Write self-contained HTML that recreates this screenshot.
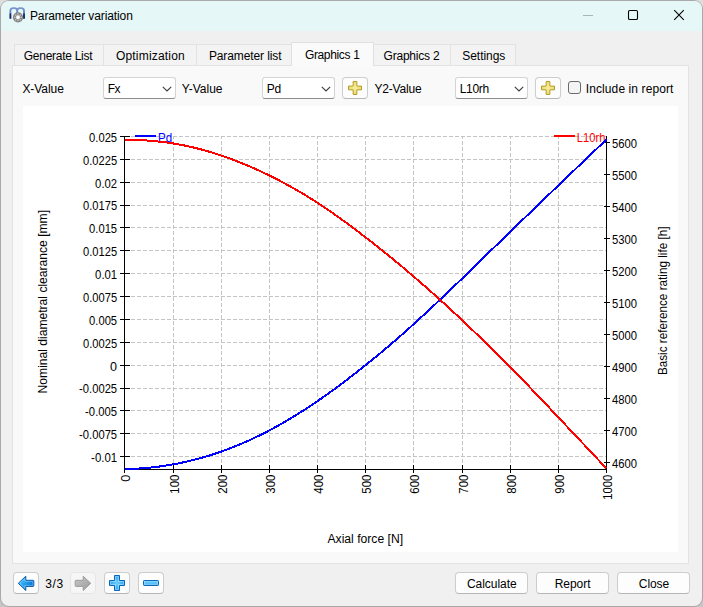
<!DOCTYPE html>
<html lang="en"><head><meta charset="utf-8"><title>Parameter variation</title>
<style>
html,body{margin:0;padding:0;}
body{width:703px;height:607px;overflow:hidden;background:linear-gradient(#dedede,#dedede 20px,#c6c6c6 590px,#c6c6c6);font-family:"Liberation Sans",sans-serif;font-size:12px;color:#000;position:relative;}
.abs,.t,.chart,.btn,.combo,.tab{position:absolute;box-sizing:border-box;}
.win{position:absolute;left:1px;top:1px;width:701px;height:605px;background:#f0f0f0;border-radius:8px;box-shadow:0 0 0 1px #a9a9a9;overflow:hidden;}
.inner{position:absolute;left:-1px;top:-1px;width:703px;height:607px;}
.titlebar{left:1px;top:1px;width:701px;height:30px;background:#e5f7f7;}
.t{white-space:pre;line-height:14px;font-size:12px;z-index:5;}
.tab{top:44px;height:21px;background:#f3f3f3;border:1px solid #e2e2e2;border-bottom:none;}
.tab.sel{top:42px;height:24px;background:#fafafa;border-color:#e0e0e0;z-index:2;}
.pane{left:12px;top:65px;width:677px;height:499px;background:#f9f9f9;border:1px solid #e3e3e3;}
.combo{top:77px;width:73px;height:22px;background:#fff;border:1px solid #d4d4d4;border-bottom-color:#8c8c8c;border-radius:3px;}
.btn{height:22px;background:#fdfdfd;border:1px solid #cdcdcd;border-bottom-color:#b6b6b6;border-radius:4px;}
.btn.dis{background:#f6f6f6;border-color:#e6e6e6;}
.chk{left:568px;top:81px;width:13px;height:13px;border:1px solid #6a6a6a;border-radius:3px;background:#f4f4f4;}
svg{display:block;overflow:visible;}
</style></head><body>
<div class="abs" style="left:702px;top:8px;width:1px;height:590px;background:#8e8e8e"></div>
<div class="win"><div class="inner">
<div class="abs titlebar"></div>
<svg class="abs" style="left:8px;top:6px" width="19" height="19" viewBox="8 6 19 19">
<defs><linearGradient id="mg" x1="0" y1="7" x2="0" y2="19" gradientUnits="userSpaceOnUse"><stop offset="0" stop-color="#7d99d0"/><stop offset="0.5" stop-color="#6985c4"/><stop offset="0.57" stop-color="#1b2b72"/><stop offset="1" stop-color="#141f60"/></linearGradient></defs>
<path d="M10.4 18.7 V10.8 Q10.4 8.1 13.1 8.1 H14.5 Q17.2 8.1 17.2 10.8 V18 M17.2 10.8 Q17.2 8.1 19.9 8.1 H21.3 Q24 8.1 24 10.8 V18.7" fill="none" stroke="url(#mg)" stroke-width="1.9"/>
<circle cx="18" cy="17.3" r="5.1" fill="#858585"/><circle cx="21.30" cy="17.30" r="0.75" fill="#c9c9c9"/><circle cx="20.33" cy="19.63" r="0.75" fill="#c9c9c9"/><circle cx="18.00" cy="20.60" r="0.75" fill="#c9c9c9"/><circle cx="15.67" cy="19.63" r="0.75" fill="#c9c9c9"/><circle cx="14.70" cy="17.30" r="0.75" fill="#c9c9c9"/><circle cx="15.67" cy="14.97" r="0.75" fill="#c9c9c9"/><circle cx="18.00" cy="14.00" r="0.75" fill="#c9c9c9"/><circle cx="20.33" cy="14.97" r="0.75" fill="#c9c9c9"/><circle cx="18" cy="17.3" r="2.2" fill="#d4d4d4"/><circle cx="18" cy="17.3" r="1.5" fill="#ffffff"/>
</svg>
<svg class="abs" style="left:570px;top:0px" width="133" height="32" viewBox="570 0 133 32">
<line x1="583" y1="15.5" x2="593" y2="15.5" stroke="#a9b6b6" stroke-width="1"/>
<rect x="628.5" y="10.5" width="9" height="9" rx="1.3" fill="none" stroke="#000" stroke-width="1.1"/>
<path d="M674.2 10.2 L683.8 19.8 M683.8 10.2 L674.2 19.8" stroke="#000" stroke-width="1.1" fill="none"/>
</svg>
<div class="abs pane"></div>
<div class="tab " style="left:14px;width:91px"></div>
<div class="tab " style="left:103px;width:95px"></div>
<div class="tab " style="left:196px;width:97px"></div>
<div class="tab sel" style="left:291px;width:83px"></div>
<div class="tab " style="left:373px;width:79px"></div>
<div class="tab " style="left:450px;width:66px"></div>
<div class="combo" style="left:103px"></div>
<svg class="abs" style="left:162px;top:86px" width="10" height="6" viewBox="0 0 10 6"><path d="M0.8 0.8 L5 5 L9.2 0.8" fill="none" stroke="#3c3c3c" stroke-width="1.1"/></svg>
<div class="combo" style="left:262px"></div>
<svg class="abs" style="left:321px;top:86px" width="10" height="6" viewBox="0 0 10 6"><path d="M0.8 0.8 L5 5 L9.2 0.8" fill="none" stroke="#3c3c3c" stroke-width="1.1"/></svg>
<div class="combo" style="left:455px"></div>
<svg class="abs" style="left:514px;top:86px" width="10" height="6" viewBox="0 0 10 6"><path d="M0.8 0.8 L5 5 L9.2 0.8" fill="none" stroke="#3c3c3c" stroke-width="1.1"/></svg>
<div class="btn" style="left:342px;top:77px;width:26px"></div>
<svg class="abs" style="left:0;top:0" width="703" height="607" viewBox="0 0 703 607"><defs><radialGradient id="gp0" cx="355" cy="87.95" r="7.8" gradientUnits="userSpaceOnUse"><stop offset="0" stop-color="#f8ee98"/><stop offset="1" stop-color="#e4ca42"/></radialGradient></defs><path d="M353.15 81.45 H356.85 V86.10000000000001 H361.5 V89.8 H356.85 V94.45 H353.15 V89.8 H348.5 V86.10000000000001 H353.15 Z" fill="url(#gp0)" stroke="#b29c24" stroke-width="1" stroke-linejoin="round"/><path d="M354.15 82.45 H355.85 V87.10000000000001 H360.5 V88.8 H355.85 V93.45 H354.15 V88.8 H349.5 V87.10000000000001 H354.15 Z" fill="none" stroke="rgba(255,255,255,0.25)" stroke-width="0.8" stroke-linejoin="round"/></svg>
<div class="btn" style="left:535px;top:77px;width:26px"></div>
<svg class="abs" style="left:0;top:0" width="703" height="607" viewBox="0 0 703 607"><defs><radialGradient id="gp1" cx="548" cy="87.95" r="7.8" gradientUnits="userSpaceOnUse"><stop offset="0" stop-color="#f8ee98"/><stop offset="1" stop-color="#e4ca42"/></radialGradient></defs><path d="M546.15 81.45 H549.85 V86.10000000000001 H554.5 V89.8 H549.85 V94.45 H546.15 V89.8 H541.5 V86.10000000000001 H546.15 Z" fill="url(#gp1)" stroke="#b29c24" stroke-width="1" stroke-linejoin="round"/><path d="M547.15 82.45 H548.85 V87.10000000000001 H553.5 V88.8 H548.85 V93.45 H547.15 V88.8 H542.5 V87.10000000000001 H547.15 Z" fill="none" stroke="rgba(255,255,255,0.25)" stroke-width="0.8" stroke-linejoin="round"/></svg>
<div class="abs chk"></div>
<svg class="chart" width="655" height="446" viewBox="23 106 655 446" style="left:23px;top:106px">
<rect x="23" y="106" width="655" height="446" fill="#ffffff"/>
<g stroke="#c4c4c4" stroke-width="1" stroke-dasharray="4 2" shape-rendering="crispEdges" fill="none">
<line x1="131" y1="136.5" x2="606" y2="136.5"/>
<line x1="131" y1="159.5" x2="606" y2="159.5"/>
<line x1="131" y1="182.5" x2="606" y2="182.5"/>
<line x1="131" y1="205.5" x2="606" y2="205.5"/>
<line x1="131" y1="227.5" x2="606" y2="227.5"/>
<line x1="131" y1="250.5" x2="606" y2="250.5"/>
<line x1="131" y1="273.5" x2="606" y2="273.5"/>
<line x1="131" y1="296.5" x2="606" y2="296.5"/>
<line x1="131" y1="319.5" x2="606" y2="319.5"/>
<line x1="131" y1="342.5" x2="606" y2="342.5"/>
<line x1="131" y1="365.5" x2="606" y2="365.5"/>
<line x1="131" y1="388.5" x2="606" y2="388.5"/>
<line x1="131" y1="410.5" x2="606" y2="410.5"/>
<line x1="131" y1="433.5" x2="606" y2="433.5"/>
<line x1="131" y1="456.5" x2="606" y2="456.5"/>
<line x1="173.5" y1="136" x2="173.5" y2="465" stroke-dashoffset="1"/>
<line x1="221.5" y1="136" x2="221.5" y2="465" stroke-dashoffset="1"/>
<line x1="269.5" y1="136" x2="269.5" y2="465" stroke-dashoffset="1"/>
<line x1="317.5" y1="136" x2="317.5" y2="465" stroke-dashoffset="1"/>
<line x1="365.5" y1="136" x2="365.5" y2="465" stroke-dashoffset="1"/>
<line x1="413.5" y1="136" x2="413.5" y2="465" stroke-dashoffset="1"/>
<line x1="462.5" y1="136" x2="462.5" y2="465" stroke-dashoffset="1"/>
<line x1="510.5" y1="136" x2="510.5" y2="465" stroke-dashoffset="1"/>
<line x1="558.5" y1="136" x2="558.5" y2="465" stroke-dashoffset="1"/>
</g>
<g stroke="#000" stroke-width="1" shape-rendering="crispEdges" fill="none">
<line x1="124.5" y1="136" x2="124.5" y2="473"/>
<line x1="606.5" y1="136" x2="606.5" y2="473"/>
<line x1="124" y1="469.5" x2="607" y2="469.5"/>
<line x1="120" y1="136.5" x2="130" y2="136.5"/>
<line x1="120" y1="159.5" x2="130" y2="159.5"/>
<line x1="120" y1="182.5" x2="130" y2="182.5"/>
<line x1="120" y1="205.5" x2="130" y2="205.5"/>
<line x1="120" y1="227.5" x2="130" y2="227.5"/>
<line x1="120" y1="250.5" x2="130" y2="250.5"/>
<line x1="120" y1="273.5" x2="130" y2="273.5"/>
<line x1="120" y1="296.5" x2="130" y2="296.5"/>
<line x1="120" y1="319.5" x2="130" y2="319.5"/>
<line x1="120" y1="342.5" x2="130" y2="342.5"/>
<line x1="120" y1="365.5" x2="130" y2="365.5"/>
<line x1="120" y1="388.5" x2="130" y2="388.5"/>
<line x1="120" y1="410.5" x2="130" y2="410.5"/>
<line x1="120" y1="433.5" x2="130" y2="433.5"/>
<line x1="120" y1="456.5" x2="130" y2="456.5"/>
<line x1="604" y1="142.5" x2="610" y2="142.5"/>
<line x1="604" y1="174.5" x2="610" y2="174.5"/>
<line x1="604" y1="206.5" x2="610" y2="206.5"/>
<line x1="604" y1="238.5" x2="610" y2="238.5"/>
<line x1="604" y1="270.5" x2="610" y2="270.5"/>
<line x1="604" y1="302.5" x2="610" y2="302.5"/>
<line x1="604" y1="334.5" x2="610" y2="334.5"/>
<line x1="604" y1="366.5" x2="610" y2="366.5"/>
<line x1="604" y1="398.5" x2="610" y2="398.5"/>
<line x1="604" y1="430.5" x2="610" y2="430.5"/>
<line x1="604" y1="462.5" x2="610" y2="462.5"/>
<line x1="124.5" y1="465" x2="124.5" y2="473"/>
<line x1="173.5" y1="465" x2="173.5" y2="473"/>
<line x1="221.5" y1="465" x2="221.5" y2="473"/>
<line x1="269.5" y1="465" x2="269.5" y2="473"/>
<line x1="317.5" y1="465" x2="317.5" y2="473"/>
<line x1="365.5" y1="465" x2="365.5" y2="473"/>
<line x1="413.5" y1="465" x2="413.5" y2="473"/>
<line x1="462.5" y1="465" x2="462.5" y2="473"/>
<line x1="510.5" y1="465" x2="510.5" y2="473"/>
<line x1="558.5" y1="465" x2="558.5" y2="473"/>
<line x1="606.5" y1="465" x2="606.5" y2="473"/>
</g>
<line x1="135" y1="136" x2="156" y2="136" stroke="#0000ff" stroke-width="2" shape-rendering="crispEdges"/>
<line x1="554" y1="136" x2="575" y2="136" stroke="#ff0000" stroke-width="2" shape-rendering="crispEdges"/>
<g font-family='"Liberation Sans", sans-serif' font-size="12" fill="#000">
<text x="158" y="141.5" fill="#0000ff" textLength="14.2" lengthAdjust="spacingAndGlyphs">Pd</text>
<text x="576.8" y="141.5" fill="#ff0000" textLength="28.6" lengthAdjust="spacingAndGlyphs">L10rh</text>
<text x="117.1" y="141.8" text-anchor="end" font-size="12.6" textLength="28" lengthAdjust="spacingAndGlyphs">0.025</text>
<text x="117.1" y="164.7" text-anchor="end" font-size="12.6" textLength="34" lengthAdjust="spacingAndGlyphs">0.0225</text>
<text x="117.1" y="187.5" text-anchor="end" font-size="12.6" textLength="22" lengthAdjust="spacingAndGlyphs">0.02</text>
<text x="117.1" y="210.4" text-anchor="end" font-size="12.6" textLength="34" lengthAdjust="spacingAndGlyphs">0.0175</text>
<text x="117.1" y="233.3" text-anchor="end" font-size="12.6" textLength="28" lengthAdjust="spacingAndGlyphs">0.015</text>
<text x="117.1" y="256.2" text-anchor="end" font-size="12.6" textLength="34" lengthAdjust="spacingAndGlyphs">0.0125</text>
<text x="117.1" y="279.0" text-anchor="end" font-size="12.6" textLength="22" lengthAdjust="spacingAndGlyphs">0.01</text>
<text x="117.1" y="301.9" text-anchor="end" font-size="12.6" textLength="34" lengthAdjust="spacingAndGlyphs">0.0075</text>
<text x="117.1" y="324.8" text-anchor="end" font-size="12.6" textLength="28" lengthAdjust="spacingAndGlyphs">0.005</text>
<text x="117.1" y="347.6" text-anchor="end" font-size="12.6" textLength="34" lengthAdjust="spacingAndGlyphs">0.0025</text>
<text x="117.1" y="370.5" text-anchor="end" font-size="12.6" textLength="7" lengthAdjust="spacingAndGlyphs">0</text>
<text x="117.1" y="393.4" text-anchor="end" font-size="12.6" textLength="38" lengthAdjust="spacingAndGlyphs">-0.0025</text>
<text x="117.1" y="416.2" text-anchor="end" font-size="12.6" textLength="32" lengthAdjust="spacingAndGlyphs">-0.005</text>
<text x="117.1" y="439.1" text-anchor="end" font-size="12.6" textLength="38" lengthAdjust="spacingAndGlyphs">-0.0075</text>
<text x="117.1" y="462.0" text-anchor="end" font-size="12.6" textLength="26" lengthAdjust="spacingAndGlyphs">-0.01</text>
<text x="611.9" y="147.8" font-size="12.6" textLength="25" lengthAdjust="spacingAndGlyphs">5600</text>
<text x="611.9" y="179.8" font-size="12.6" textLength="25" lengthAdjust="spacingAndGlyphs">5500</text>
<text x="611.9" y="211.8" font-size="12.6" textLength="25" lengthAdjust="spacingAndGlyphs">5400</text>
<text x="611.9" y="243.8" font-size="12.6" textLength="25" lengthAdjust="spacingAndGlyphs">5300</text>
<text x="611.9" y="275.8" font-size="12.6" textLength="25" lengthAdjust="spacingAndGlyphs">5200</text>
<text x="611.9" y="307.8" font-size="12.6" textLength="25" lengthAdjust="spacingAndGlyphs">5100</text>
<text x="611.9" y="339.8" font-size="12.6" textLength="25" lengthAdjust="spacingAndGlyphs">5000</text>
<text x="611.9" y="371.8" font-size="12.6" textLength="25" lengthAdjust="spacingAndGlyphs">4900</text>
<text x="611.9" y="403.8" font-size="12.6" textLength="25" lengthAdjust="spacingAndGlyphs">4800</text>
<text x="611.9" y="435.8" font-size="12.6" textLength="25" lengthAdjust="spacingAndGlyphs">4700</text>
<text x="611.9" y="467.8" font-size="12.6" textLength="25" lengthAdjust="spacingAndGlyphs">4600</text>
<text transform="translate(130.1,474.7) rotate(-90)" text-anchor="end" font-size="12.6" textLength="7" lengthAdjust="spacingAndGlyphs">0</text>
<text transform="translate(179.1,474.7) rotate(-90)" text-anchor="end" font-size="12.6" textLength="19" lengthAdjust="spacingAndGlyphs">100</text>
<text transform="translate(227.1,474.7) rotate(-90)" text-anchor="end" font-size="12.6" textLength="19" lengthAdjust="spacingAndGlyphs">200</text>
<text transform="translate(275.1,474.7) rotate(-90)" text-anchor="end" font-size="12.6" textLength="19" lengthAdjust="spacingAndGlyphs">300</text>
<text transform="translate(323.1,474.7) rotate(-90)" text-anchor="end" font-size="12.6" textLength="19" lengthAdjust="spacingAndGlyphs">400</text>
<text transform="translate(371.1,474.7) rotate(-90)" text-anchor="end" font-size="12.6" textLength="19" lengthAdjust="spacingAndGlyphs">500</text>
<text transform="translate(419.1,474.7) rotate(-90)" text-anchor="end" font-size="12.6" textLength="19" lengthAdjust="spacingAndGlyphs">600</text>
<text transform="translate(468.1,474.7) rotate(-90)" text-anchor="end" font-size="12.6" textLength="19" lengthAdjust="spacingAndGlyphs">700</text>
<text transform="translate(516.1,474.7) rotate(-90)" text-anchor="end" font-size="12.6" textLength="19" lengthAdjust="spacingAndGlyphs">800</text>
<text transform="translate(564.1,474.7) rotate(-90)" text-anchor="end" font-size="12.6" textLength="19" lengthAdjust="spacingAndGlyphs">900</text>
<text transform="translate(612.1,474.7) rotate(-90)" text-anchor="end" font-size="12.6" textLength="25" lengthAdjust="spacingAndGlyphs">1000</text>
<text x="365.3" y="542.7" text-anchor="middle" textLength="75.6" lengthAdjust="spacingAndGlyphs">Axial force [N]</text>
<text transform="translate(46.6,301.7) rotate(-90)" text-anchor="middle" textLength="183.4" lengthAdjust="spacingAndGlyphs">Nominal diametral clearance [mm]</text>
<text transform="translate(666.8,300.8) rotate(-90)" text-anchor="middle" textLength="148.6" lengthAdjust="spacingAndGlyphs">Basic reference rating life [h]</text>
</g>
<polyline points="124.5,469.0 127.0,469.0 129.4,468.9 131.8,468.9 134.3,468.8 136.8,468.7 139.2,468.5 141.7,468.4 144.1,468.2 146.6,468.0 149.0,467.7 151.4,467.5 153.9,467.2 156.3,466.9 158.8,466.6 161.2,466.3 163.7,465.9 166.2,465.5 168.6,465.1 171.1,464.7 173.5,464.3 175.9,463.8 178.3,463.4 180.7,462.9 183.1,462.4 185.5,461.9 187.9,461.3 190.3,460.7 192.7,460.1 195.1,459.5 197.5,458.9 199.9,458.3 202.3,457.6 204.7,456.9 207.1,456.2 209.5,455.5 211.9,454.7 214.3,453.9 216.7,453.2 219.1,452.3 221.5,451.5 223.9,450.6 226.3,449.8 228.7,448.9 231.1,447.9 233.5,447.0 235.9,446.0 238.3,445.0 240.7,444.0 243.1,443.0 245.5,441.9 247.9,440.9 250.3,439.8 252.7,438.7 255.1,437.5 257.5,436.4 259.9,435.2 262.3,434.0 264.7,432.8 267.1,431.6 269.5,430.3 271.9,429.0 274.3,427.7 276.7,426.4 279.1,425.1 281.5,423.7 283.9,422.3 286.3,420.9 288.7,419.5 291.1,418.1 293.5,416.6 295.9,415.2 298.3,413.7 300.7,412.2 303.1,410.6 305.5,409.1 307.9,407.5 310.3,406.0 312.7,404.4 315.1,402.7 317.5,401.1 319.9,399.4 322.3,397.8 324.7,396.1 327.1,394.4 329.5,392.7 331.9,390.9 334.3,389.2 336.7,387.4 339.1,385.6 341.5,383.9 343.9,382.0 346.3,380.2 348.7,378.4 351.1,376.5 353.5,374.7 355.9,372.8 358.3,370.9 360.7,369.0 363.1,367.1 365.5,365.2 367.9,363.3 370.3,361.3 372.7,359.4 375.1,357.4 377.5,355.4 379.9,353.5 382.3,351.5 384.7,349.4 387.1,347.4 389.5,345.4 391.9,343.3 394.3,341.3 396.7,339.2 399.1,337.1 401.5,335.0 403.9,332.9 406.3,330.7 408.7,328.6 411.1,326.4 413.5,324.2 415.9,322.0 418.4,319.8 420.9,317.5 423.3,315.3 425.8,313.0 428.2,310.8 430.6,308.5 433.1,306.2 435.6,303.9 438.0,301.6 440.4,299.3 442.9,296.9 445.4,294.6 447.8,292.3 450.2,289.9 452.7,287.6 455.1,285.2 457.6,282.9 460.1,280.5 462.5,278.2 464.9,275.9 467.3,273.5 469.7,271.2 472.1,268.8 474.5,266.5 476.9,264.1 479.3,261.8 481.7,259.5 484.1,257.1 486.5,254.8 488.9,252.5 491.3,250.1 493.7,247.8 496.1,245.5 498.5,243.1 500.9,240.8 503.3,238.5 505.7,236.1 508.1,233.8 510.5,231.5 512.9,229.2 515.3,226.9 517.7,224.5 520.1,222.2 522.5,219.9 524.9,217.6 527.3,215.3 529.7,213.0 532.1,210.7 534.5,208.3 536.9,206.0 539.3,203.7 541.7,201.4 544.1,199.1 546.5,196.8 548.9,194.5 551.3,192.2 553.7,189.9 556.1,187.6 558.5,185.3 560.9,183.0 563.3,180.7 565.7,178.4 568.1,176.1 570.5,173.8 572.9,171.5 575.3,169.2 577.7,166.9 580.1,164.6 582.5,162.3 584.9,160.0 587.3,157.7 589.7,155.4 592.1,153.2 594.5,150.9 596.9,148.6 599.3,146.3 601.7,144.0 604.1,141.7 606.5,139.4" fill="none" stroke="#0000ff" stroke-width="2" shape-rendering="crispEdges"/>
<polyline points="124.5,139.8 127.0,139.8 129.4,139.8 131.8,139.9 134.3,140.0 136.8,140.0 139.2,140.1 141.7,140.2 144.1,140.4 146.6,140.5 149.0,140.7 151.4,140.9 153.9,141.1 156.3,141.3 158.8,141.6 161.2,141.8 163.7,142.1 166.2,142.4 168.6,142.8 171.1,143.1 173.5,143.5 175.9,143.9 178.3,144.3 180.7,144.8 183.1,145.2 185.5,145.7 187.9,146.2 190.3,146.8 192.7,147.3 195.1,147.9 197.5,148.5 199.9,149.1 202.3,149.7 204.7,150.4 207.1,151.1 209.5,151.8 211.9,152.5 214.3,153.3 216.7,154.0 219.1,154.8 221.5,155.6 223.9,156.4 226.3,157.3 228.7,158.1 231.1,159.0 233.5,159.9 235.9,160.8 238.3,161.8 240.7,162.7 243.1,163.7 245.5,164.7 247.9,165.7 250.3,166.7 252.7,167.8 255.1,168.8 257.5,169.9 259.9,171.0 262.3,172.1 264.7,173.3 267.1,174.4 269.5,175.6 271.9,176.8 274.3,178.0 276.7,179.2 279.1,180.4 281.5,181.7 283.9,183.0 286.3,184.3 288.7,185.6 291.1,186.9 293.5,188.3 295.9,189.6 298.3,191.0 300.7,192.4 303.1,193.8 305.5,195.3 307.9,196.7 310.3,198.2 312.7,199.7 315.1,201.3 317.5,202.8 319.9,204.4 322.3,206.0 324.7,207.6 327.1,209.2 329.5,210.8 331.9,212.5 334.3,214.2 336.7,215.9 339.1,217.6 341.5,219.3 343.9,221.1 346.3,222.8 348.7,224.6 351.1,226.4 353.5,228.2 355.9,230.0 358.3,231.8 360.7,233.6 363.1,235.5 365.5,237.3 367.9,239.2 370.3,241.0 372.7,242.9 375.1,244.8 377.5,246.7 379.9,248.6 382.3,250.5 384.7,252.4 387.1,254.3 389.5,256.3 391.9,258.2 394.3,260.2 396.7,262.2 399.1,264.1 401.5,266.2 403.9,268.2 406.3,270.2 408.7,272.3 411.1,274.3 413.5,276.4 415.9,278.5 418.4,280.6 420.9,282.7 423.3,284.9 425.8,287.0 428.2,289.2 430.6,291.4 433.1,293.5 435.6,295.7 438.0,298.0 440.4,300.2 442.9,302.4 445.4,304.6 447.8,306.9 450.2,309.1 452.7,311.4 455.1,313.7 457.6,315.9 460.1,318.2 462.5,320.5 464.9,322.8 467.3,325.1 469.7,327.4 472.1,329.7 474.5,332.0 476.9,334.3 479.3,336.6 481.7,338.9 484.1,341.2 486.5,343.6 488.9,345.9 491.3,348.3 493.7,350.6 496.1,353.0 498.5,355.4 500.9,357.8 503.3,360.2 505.7,362.6 508.1,365.0 510.5,367.4 512.9,369.8 515.3,372.3 517.7,374.7 520.1,377.2 522.5,379.7 524.9,382.2 527.3,384.6 529.7,387.1 532.1,389.7 534.5,392.2 536.9,394.7 539.3,397.2 541.7,399.7 544.1,402.3 546.5,404.8 548.9,407.3 551.3,409.9 553.7,412.4 556.1,415.0 558.5,417.5 560.9,420.0 563.3,422.6 565.7,425.1 568.1,427.7 570.5,430.2 572.9,432.8 575.3,435.3 577.7,437.9 580.1,440.4 582.5,443.0 584.9,445.5 587.3,448.1 589.7,450.6 592.1,453.2 594.5,455.7 596.9,458.3 599.3,460.8 601.7,463.4 604.1,465.9 606.5,468.5" fill="none" stroke="#ff0000" stroke-width="2" shape-rendering="crispEdges"/>
</svg>
<div class="btn" style="left:13px;top:572px;width:26px"></div>
<div class="btn dis" style="left:70px;top:572px;width:26px"></div>
<div class="btn" style="left:104px;top:572px;width:26px"></div>
<div class="btn" style="left:138px;top:572px;width:26px"></div>
<div class="btn" style="left:455px;top:572px;width:73px"></div>
<div class="btn" style="left:536px;top:572px;width:73px"></div>
<div class="btn" style="left:617px;top:572px;width:73px"></div>
<svg class="abs" style="left:0;top:0" width="703" height="607" viewBox="0 0 703 607">
<defs><linearGradient id="ab" x1="0" y1="0" x2="1" y2="0.6"><stop offset="0" stop-color="#66ccff"/><stop offset="0.45" stop-color="#2aa8f4"/><stop offset="1" stop-color="#0670d0"/></linearGradient>
<linearGradient id="ag" x1="0" y1="0" x2="1" y2="1"><stop offset="0" stop-color="#c8c8c8"/><stop offset="1" stop-color="#9a9a9a"/></linearGradient></defs>
<path d="M18.3 583.3 L25.8 576.2 V580.3 H33 Q33.8 580.3 33.8 581.1 V585.6 Q33.8 586.4 33 586.4 H25.8 V590.5 Z" fill="url(#ab)" stroke="#0b5cab" stroke-width="1" stroke-linejoin="round"/>
<path d="M19.8 583.3 L24.8 578.6 V581.3 H32.8 V585.4 H24.8 V588.1 Z" fill="none" stroke="rgba(255,255,255,0.4)" stroke-width="0.8" stroke-linejoin="round"/>
<path d="M90.7 583.3 L83.2 576.2 V580.3 H76 Q75.2 580.3 75.2 581.1 V585.6 Q75.2 586.4 76 586.4 H83.2 V590.5 Z" fill="url(#ag)" stroke="#9c9c9c" stroke-width="1" stroke-linejoin="round"/>
</svg>
<svg class="abs" style="left:0;top:0" width="703" height="607" viewBox="0 0 703 607"><defs><radialGradient id="bp" cx="117" cy="583" r="9.0" gradientUnits="userSpaceOnUse"><stop offset="0" stop-color="#6ad0ff"/><stop offset="1" stop-color="#1c98ea"/></radialGradient></defs><path d="M114.5 575.5 H119.5 V580.5 H124.5 V585.5 H119.5 V590.5 H114.5 V585.5 H109.5 V580.5 H114.5 Z" fill="url(#bp)" stroke="#0668ba" stroke-width="1" stroke-linejoin="round"/><path d="M115.5 576.5 H118.5 V581.5 H123.5 V584.5 H118.5 V589.5 H115.5 V584.5 H110.5 V581.5 H115.5 Z" fill="none" stroke="rgba(255,255,255,0.45)" stroke-width="0.8" stroke-linejoin="round"/></svg>
<svg class="abs" style="left:0;top:0" width="703" height="607" viewBox="0 0 703 607"><defs><linearGradient id="bm" x1="0" y1="0" x2="0" y2="1"><stop offset="0" stop-color="#3aaef4"/><stop offset="0.5" stop-color="#62ccff"/><stop offset="1" stop-color="#1c98ea"/></linearGradient></defs>
<rect x="143.5" y="580.5" width="15" height="5" rx="0.8" fill="url(#bm)" stroke="#0668ba" stroke-width="1"/><rect x="144.5" y="581.5" width="13" height="3" fill="none" stroke="rgba(255,255,255,0.4)" stroke-width="0.8"/></svg>
<span class="t " style="left:29.9px;top:9.4px;letter-spacing:-0.096px;">Parameter variation</span>
<span class="t " style="left:23.8px;top:49.3px;letter-spacing:-0.281px;">Generate List</span>
<span class="t " style="left:115.9px;top:49.3px;letter-spacing:0.200px;">Optimization</span>
<span class="t " style="left:208.9px;top:49.3px;letter-spacing:-0.102px;">Parameter list</span>
<span class="t " style="left:304.9px;top:47.5px;letter-spacing:-0.343px;">Graphics 1</span>
<span class="t " style="left:383.5px;top:49.3px;letter-spacing:-0.203px;">Graphics 2</span>
<span class="t " style="left:462.3px;top:49.3px;letter-spacing:-0.057px;">Settings</span>
<span class="t " style="left:22.4px;top:81.7px;letter-spacing:-0.059px;">X-Value</span>
<span class="t " style="left:181.8px;top:81.7px;letter-spacing:-0.000px;">Y-Value</span>
<span class="t " style="left:374.5px;top:81.7px;letter-spacing:-0.186px;">Y2-Value</span>
<span class="t " style="left:107.8px;top:81.7px;letter-spacing:-0.572px;">Fx</span>
<span class="t " style="left:266.8px;top:81.7px;letter-spacing:-0.244px;">Pd</span>
<span class="t " style="left:459.7px;top:81.7px;letter-spacing:-0.301px;">L10rh</span>
<span class="t " style="left:585.8px;top:81.7px;letter-spacing:0.096px;">Include in report</span>
<span class="t " style="left:45.3px;top:576.7px;letter-spacing:0.604px;">3/3</span>
<span class="t " style="left:466.9px;top:576.7px;letter-spacing:-0.026px;">Calculate</span>
<span class="t " style="left:554.7px;top:576.7px;letter-spacing:-0.039px;">Report</span>
<span class="t " style="left:638.8px;top:576.7px;letter-spacing:-0.077px;">Close</span>
</div></div>
</body></html>
